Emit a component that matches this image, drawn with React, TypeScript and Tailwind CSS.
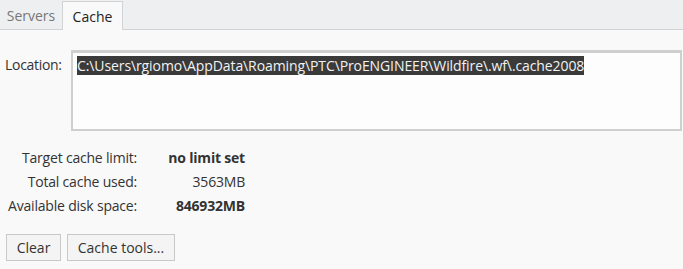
import React from "react";

export default function App() {
  const font = { fontFamily: '"Open Sans", "Noto Sans", sans-serif' };
  return (
    <div className="w-[683px] h-[269px] bg-[#f9f9f9] text-[#333] text-[14px] overflow-hidden" style={font}>
      <div className="h-[30px] bg-[#eeeff1] border-b border-[#d2d3d5] flex items-end">
        <div className="h-[28px] w-[62px] flex items-center justify-center text-[#777]">Servers</div>
        <div className="h-[29px] w-[61px] mb-[-1px] bg-[#f9f9f9] border border-b-0 border-[#d2d3d5] flex items-center justify-center text-[#222]">Cache</div>
      </div>
      <div className="flex items-start pt-[20px] pl-[5px]">
        <div className="w-[66px] pt-[4px] tracking-[-0.3px]">Location:</div>
        <div className="w-[611px] h-[81px] border-2 border-t-[3px] border-[#cfcfcf] bg-[#fdfdfd] pl-[4px] pt-[2px]">
          <span className="bg-[#3a3a3a] text-[#f2f2f2] leading-[19px] inline-block tracking-[-0.1px]">C:\Users\rgiomo\AppData\Roaming\PTC\ProENGINEER\Wildfire\.wf\.cache2008</span>
        </div>
      </div>
      <div className="grid grid-cols-[137px_108px] gap-y-[5px] mt-[17px] leading-[19px] tracking-[-0.2px]">
        <div className="text-right">Target cache limit:</div>
        <div className="text-right font-bold">no limit set</div>
        <div className="text-right">Total cache used:</div>
        <div className="text-right">3563MB</div>
        <div className="text-right">Available disk space:</div>
        <div className="text-right font-bold">846932MB</div>
      </div>
      <div className="flex gap-[6px] pl-[6px] mt-[19px]">
        <button className="w-[55px] h-[27px] border border-[#c9c9c9] bg-[#f4f4f4]">Clear</button>
        <button className="w-[108px] h-[27px] border border-[#c9c9c9] bg-[#f4f4f4]">Cache tools...</button>
      </div>
    </div>
  );
}
